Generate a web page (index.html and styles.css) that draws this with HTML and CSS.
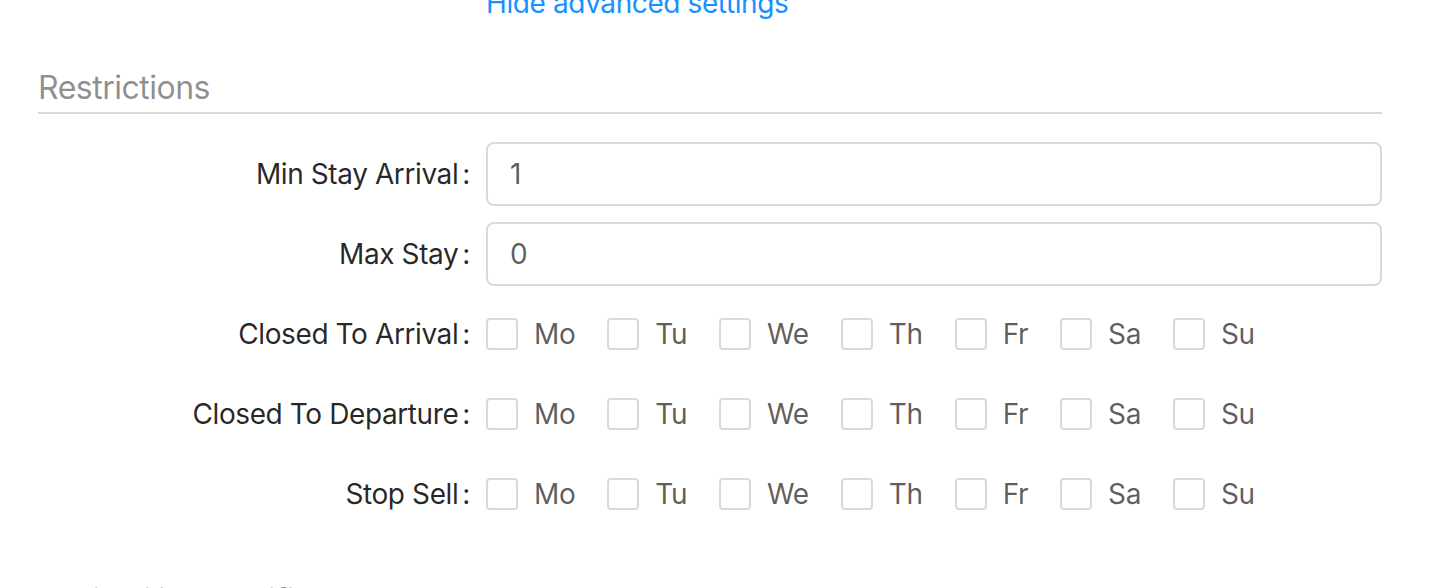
FILE: index.html
```html
<!DOCTYPE html>
<html lang="en">
<head>
<meta charset="utf-8">
<title>Restrictions</title>
<link rel="stylesheet" href="styles.css">
</head>
<body>
<div class="page">
  <form class="form">
    <div class="form-row link-row">
      <div class="label-col"></div>
      <div class="control-col"><a class="toggle-link" href="#">Hide advanced settings</a></div>
    </div>

    <h3 class="section-title">Restrictions</h3>

    <div class="form-row">
      <div class="label-col"><label class="label">Min Stay Arrival</label></div>
      <div class="control-col"><input class="input" type="text" value="1"></div>
    </div>

    <div class="form-row">
      <div class="label-col"><label class="label">Max Stay</label></div>
      <div class="control-col"><input class="input" type="text" value="0"></div>
    </div>

    <div class="form-row">
      <div class="label-col"><label class="label">Closed To Arrival</label></div>
      <div class="control-col">
        <div class="checkbox-group">
          <label class="checkbox"><span class="box"></span><span class="cb-text">Mo</span></label>
          <label class="checkbox"><span class="box"></span><span class="cb-text">Tu</span></label>
          <label class="checkbox"><span class="box"></span><span class="cb-text">We</span></label>
          <label class="checkbox"><span class="box"></span><span class="cb-text">Th</span></label>
          <label class="checkbox"><span class="box"></span><span class="cb-text">Fr</span></label>
          <label class="checkbox"><span class="box"></span><span class="cb-text">Sa</span></label>
          <label class="checkbox"><span class="box"></span><span class="cb-text">Su</span></label>
        </div>
      </div>
    </div>

    <div class="form-row">
      <div class="label-col"><label class="label">Closed To Departure</label></div>
      <div class="control-col">
        <div class="checkbox-group">
          <label class="checkbox"><span class="box"></span><span class="cb-text">Mo</span></label>
          <label class="checkbox"><span class="box"></span><span class="cb-text">Tu</span></label>
          <label class="checkbox"><span class="box"></span><span class="cb-text">We</span></label>
          <label class="checkbox"><span class="box"></span><span class="cb-text">Th</span></label>
          <label class="checkbox"><span class="box"></span><span class="cb-text">Fr</span></label>
          <label class="checkbox"><span class="box"></span><span class="cb-text">Sa</span></label>
          <label class="checkbox"><span class="box"></span><span class="cb-text">Su</span></label>
        </div>
      </div>
    </div>

    <div class="form-row">
      <div class="label-col"><label class="label">Stop Sell</label></div>
      <div class="control-col">
        <div class="checkbox-group">
          <label class="checkbox"><span class="box"></span><span class="cb-text">Mo</span></label>
          <label class="checkbox"><span class="box"></span><span class="cb-text">Tu</span></label>
          <label class="checkbox"><span class="box"></span><span class="cb-text">We</span></label>
          <label class="checkbox"><span class="box"></span><span class="cb-text">Th</span></label>
          <label class="checkbox"><span class="box"></span><span class="cb-text">Fr</span></label>
          <label class="checkbox"><span class="box"></span><span class="cb-text">Sa</span></label>
          <label class="checkbox"><span class="box"></span><span class="cb-text">Su</span></label>
        </div>
      </div>
    </div>

    <h3 class="section-title next-section">Availability Modifiers</h3>
  </form>
</div>
</body>
</html>
```

FILE: styles.css
```css
* {
  box-sizing: border-box;
}

html, body {
  margin: 0;
  padding: 0;
  background: #ffffff;
  overflow: hidden;
}

body {
  font-family: Inter, "Noto Sans", sans-serif;
  font-size: 28px;
  line-height: 40px;
  letter-spacing: -0.4px;
  color: rgba(0, 0, 0, 0.85);
}

.page {
  padding: 0 48px 0 38px;
  margin-top: -17px;
}

.form {
  display: flex;
  flex-direction: column;
}

.form-row {
  display: grid;
  grid-template-columns: 448px 1fr;
  align-items: center;
  height: 80px;
}

.link-row {
  height: 40px;
}

.label-col {
  text-align: right;
}

.label {
  color: rgba(0, 0, 0, 0.85);
  white-space: nowrap;
}

.label::after {
  content: ":";
  margin: 0 16px 0 4px;
}

.toggle-link {
  color: #1890ff;
  text-decoration: none;
}

.section-title {
  margin: 45px 0 20px;
  padding-bottom: 4px;
  font-size: 32px;
  font-weight: 400;
  line-height: 40px;
  letter-spacing: -0.5px;
  color: rgba(0, 0, 0, 0.45);
  border-bottom: 2px solid #d9d9d9;
}

.next-section {
  margin-top: 47px;
}

.input {
  display: block;
  width: 100%;
  height: 64px;
  padding: 0 22px;
  font-family: inherit;
  font-size: 28px;
  letter-spacing: -0.4px;
  color: rgba(0, 0, 0, 0.65);
  background: #fff;
  border: 2px solid #d9d9d9;
  border-radius: 8px;
  outline: none;
}

.checkbox-group {
  display: flex;
  align-items: center;
}

.checkbox {
  display: inline-flex;
  align-items: center;
  margin-right: 16px;
  color: rgba(0, 0, 0, 0.65);
}

.box {
  width: 32px;
  height: 32px;
  border: 2px solid #d9d9d9;
  border-radius: 4px;
  background: #fff;
}

.cb-text {
  padding: 0 16px;
}
```
